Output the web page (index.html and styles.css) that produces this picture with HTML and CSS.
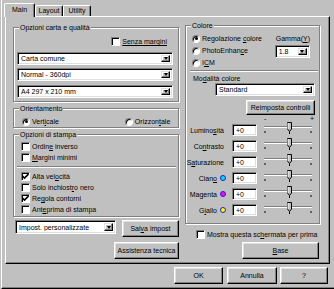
FILE: index.html
```html
<!DOCTYPE html>
<html>
  <head>
    <title>Main</title>
    <link rel="stylesheet" href="styles.css">
  </head>
  <body>
    <div class="dialog">
      <div class="tabs">
        <div class="tab active tab-main">Main</div>
        <div class="tab tab-layout">Layout</div>
        <div class="tab tab-utility">Utility</div>
      </div>

      <div class="panel">
        <div class="col-left">
          <div class="group g-paper">
            <div class="group-title">Opzioni carta e qualità</div>
            <div class="opt opt-borderless"><span class="check"></span><span class="focus">Senza margini</span></div>
            <div class="field select sel-paper"><span class="val">Carta comune</span><span class="arrow"></span></div>
            <div class="field select sel-paper"><span class="val">Normal - 360dpi</span><span class="arrow"></span></div>
            <div class="field select sel-paper sel-size"><span class="val">A4 297 x 210 mm</span><span class="arrow"></span></div>
          </div>

          <div class="group g-orient">
            <div class="group-title">Orientamento</div>
            <div class="orient-row">
              <div class="opt"><span class="radio on"></span><span>Vert<u>i</u>cale</span></div>
              <div class="opt opt-land"><span class="radio"></span><span>Orizzon<u>t</u>ale</span></div>
            </div>
          </div>

          <div class="group g-print">
            <div class="group-title">Opzioni di stampa</div>
            <div class="opt opt-first"><span class="check"></span><span>Ordin<u>e</u> inverso</span></div>
            <div class="opt"><span class="check"></span><span><u>M</u>argini minimi</span></div>
            <div class="sep"></div>
            <div class="opt opt-after-sep"><span class="check on"><svg width="7" height="7" viewBox="0 0 7 7"><polyline points="0.5,3 2.5,5 6.5,1" fill="none" stroke="#000" stroke-width="1.6"/></svg></span><span>Alta vel<u>o</u>cità</span></div>
            <div class="opt"><span class="check"></span><span>Solo inchiost<u>r</u>o nero</span></div>
            <div class="opt"><span class="check on"><svg width="7" height="7" viewBox="0 0 7 7"><polyline points="0.5,3 2.5,5 6.5,1" fill="none" stroke="#000" stroke-width="1.6"/></svg></span><span>Re<u>g</u>ola contorni</span></div>
            <div class="opt"><span class="check"></span><span>Ant<u>e</u>prima di stampa</span></div>
          </div>

          <div class="save-row">
            <div class="field select sel-custom"><span class="val">Impost. personalizzate</span><span class="arrow"></span></div>
            <button class="btn btn-save" type="button">Sal<u>v</u>a impost</button>
          </div>
          <button class="btn btn-help" type="button">Assistenza tecnica</button>
        </div>

        <div class="col-right">
          <div class="group g-color">
            <div class="group-title">Colore</div>
            <div class="color-top">
              <div class="color-modes">
                <div class="opt"><span class="radio on"></span><span>Regolazione <u>c</u>olore</span></div>
                <div class="opt"><span class="radio"></span><span>PhotoEnhan<u>c</u>e</span></div>
                <div class="opt"><span class="radio"></span><span>I<u>C</u>M</span></div>
              </div>
              <div class="gamma">
                <div class="gamma-label">Gamma(<u>Y</u>)</div>
                <div class="field select sel-gamma"><span class="val">1.8</span><span class="arrow"></span></div>
              </div>
            </div>
            <div class="sep sep-color"></div>
            <div class="mode-label">Mo<u>d</u>alità colore</div>
            <div class="field select sel-mode"><span class="val">Standard</span><span class="arrow"></span></div>
            <button class="btn btn-reset" type="button">Reimposta controlli</button>
            <div class="scale"><span>-</span><span>+</span></div>

            <div class="adj">
              <div class="adj-label"><span>Lumino<u>s</u>ità</span></div>
              <div class="field adj-input">+0</div>
              <svg class="slider" width="50" height="12" viewBox="0 0 50 12"><line x1="1" y1="4.5" x2="49" y2="4.5" stroke="#808080"/><line x1="1" y1="5.5" x2="49" y2="5.5" stroke="#fff"/><path d="M24.5 0.5 H28.5 V7 L26.5 9.5 L24.5 7 Z" fill="#c0c0c0" stroke="#000" stroke-width="1"/><line x1="25" y1="1" x2="25" y2="7" stroke="#fff"/><rect x="1.5" y="9" width="1" height="2" fill="#000"/><rect x="26" y="10" width="1" height="2" fill="#000"/><rect x="47.5" y="9" width="1" height="2" fill="#000"/></svg>
            </div>
            <div class="adj">
              <div class="adj-label"><span>Co<u>n</u>trasto</span></div>
              <div class="field adj-input">+0</div>
              <svg class="slider" width="50" height="12" viewBox="0 0 50 12"><line x1="1" y1="4.5" x2="49" y2="4.5" stroke="#808080"/><line x1="1" y1="5.5" x2="49" y2="5.5" stroke="#fff"/><path d="M24.5 0.5 H28.5 V7 L26.5 9.5 L24.5 7 Z" fill="#c0c0c0" stroke="#000" stroke-width="1"/><line x1="25" y1="1" x2="25" y2="7" stroke="#fff"/><rect x="1.5" y="9" width="1" height="2" fill="#000"/><rect x="26" y="10" width="1" height="2" fill="#000"/><rect x="47.5" y="9" width="1" height="2" fill="#000"/></svg>
            </div>
            <div class="adj">
              <div class="adj-label"><span>S<u>a</u>turazione</span></div>
              <div class="field adj-input">+0</div>
              <svg class="slider" width="50" height="12" viewBox="0 0 50 12"><line x1="1" y1="4.5" x2="49" y2="4.5" stroke="#808080"/><line x1="1" y1="5.5" x2="49" y2="5.5" stroke="#fff"/><path d="M24.5 0.5 H28.5 V7 L26.5 9.5 L24.5 7 Z" fill="#c0c0c0" stroke="#000" stroke-width="1"/><line x1="25" y1="1" x2="25" y2="7" stroke="#fff"/><rect x="1.5" y="9" width="1" height="2" fill="#000"/><rect x="26" y="10" width="1" height="2" fill="#000"/><rect x="47.5" y="9" width="1" height="2" fill="#000"/></svg>
            </div>
            <div class="adj">
              <div class="adj-label dotted"><span>Cian<u>o</u></span><span class="dot dot-cyan"></span></div>
              <div class="field adj-input">+0</div>
              <svg class="slider" width="50" height="12" viewBox="0 0 50 12"><line x1="1" y1="4.5" x2="49" y2="4.5" stroke="#808080"/><line x1="1" y1="5.5" x2="49" y2="5.5" stroke="#fff"/><path d="M24.5 0.5 H28.5 V7 L26.5 9.5 L24.5 7 Z" fill="#c0c0c0" stroke="#000" stroke-width="1"/><line x1="25" y1="1" x2="25" y2="7" stroke="#fff"/><rect x="1.5" y="9" width="1" height="2" fill="#000"/><rect x="26" y="10" width="1" height="2" fill="#000"/><rect x="47.5" y="9" width="1" height="2" fill="#000"/></svg>
            </div>
            <div class="adj">
              <div class="adj-label dotted"><span>Magenta</span><span class="dot dot-magenta"></span></div>
              <div class="field adj-input">+0</div>
              <svg class="slider" width="50" height="12" viewBox="0 0 50 12"><line x1="1" y1="4.5" x2="49" y2="4.5" stroke="#808080"/><line x1="1" y1="5.5" x2="49" y2="5.5" stroke="#fff"/><path d="M24.5 0.5 H28.5 V7 L26.5 9.5 L24.5 7 Z" fill="#c0c0c0" stroke="#000" stroke-width="1"/><line x1="25" y1="1" x2="25" y2="7" stroke="#fff"/><rect x="1.5" y="9" width="1" height="2" fill="#000"/><rect x="26" y="10" width="1" height="2" fill="#000"/><rect x="47.5" y="9" width="1" height="2" fill="#000"/></svg>
            </div>
            <div class="adj">
              <div class="adj-label dotted"><span>G<u>i</u>allo</span><span class="dot dot-yellow"></span></div>
              <div class="field adj-input">+0</div>
              <svg class="slider" width="50" height="12" viewBox="0 0 50 12"><line x1="1" y1="4.5" x2="49" y2="4.5" stroke="#808080"/><line x1="1" y1="5.5" x2="49" y2="5.5" stroke="#fff"/><path d="M24.5 0.5 H28.5 V7 L26.5 9.5 L24.5 7 Z" fill="#c0c0c0" stroke="#000" stroke-width="1"/><line x1="25" y1="1" x2="25" y2="7" stroke="#fff"/><rect x="1.5" y="9" width="1" height="2" fill="#000"/><rect x="26" y="10" width="1" height="2" fill="#000"/><rect x="47.5" y="9" width="1" height="2" fill="#000"/></svg>
            </div>
          </div>

          <div class="opt opt-show"><span class="check"></span><span>Mostra questa sc<u>h</u>ermata per prima</span></div>
          <button class="btn btn-base" type="button"><u>B</u>ase</button>
        </div>
      </div>

      <div class="actions">
        <button class="btn btn-ok" type="button">OK</button>
        <button class="btn btn-cancel" type="button">Annulla</button>
        <button class="btn btn-q" type="button">?</button>
      </div>
    </div>
  </body>
</html>
```

FILE: styles.css
```css
* {
  box-sizing: border-box;
}

body {
  margin: 0;
  background-color: #C0C0C0;
  font-family: "Liberation Sans", Arial, sans-serif;
  font-size: 7px;
  color: #000;
  overflow: hidden;
}

u {
  text-decoration-thickness: 1px;
  text-underline-offset: 1px;
}

.dialog {
  width: 333px;
  height: 289px;
  margin-left: 1px;
  padding-top: 3px;
  border-left: 1px solid #FFF;
  border-bottom: 1px solid #000;
  box-shadow: inset 0 -1px 0 #808080;
}

/* tabs */
.tabs {
  display: flex;
  align-items: flex-end;
  height: 14px;
  margin-left: 2px;
}

.tab {
  height: 11px;
  margin-bottom: 1px;
  line-height: 10px;
  text-align: center;
  border: 1px solid;
  border-color: #FFF #000 transparent #FFF;
  border-bottom: none;
  border-radius: 2px 2px 0 0;
  box-shadow: inset -1px 0 0 #808080;
}

.tab.active {
  position: relative;
  z-index: 1;
  height: 14px;
  margin-bottom: 0;
  line-height: 12px;
  background-color: #C0C0C0;
}

.tab-main { width: 31px; }
.tab-layout { width: 28px; }
.tab-utility { width: 28px; }

/* panel */
.panel {
  display: flex;
  gap: 6px;
  width: 325px;
  height: 248px;
  margin: -1px 0 0 3px;
  padding: 8px 0 0 7px;
  border: 1px solid;
  border-color: #FFF #000 #000 #FFF;
  box-shadow: inset -1px -1px 0 #808080;
}

.col-left {
  display: flex;
  flex-direction: column;
  width: 166px;
  margin-top: 2px;
}

.col-right {
  display: flex;
  flex-direction: column;
  width: 135px;
}

.group {
  display: flex;
  flex-direction: column;
  padding-bottom: 3px;
  border: 1px solid #808080;
  box-shadow: 1px 1px 0 #FFF, inset 1px 1px 0 #FFF;
}

.group-title {
  align-self: flex-start;
  height: 9px;
  line-height: 9px;
  margin: -5px 0 0 5px;
  padding: 0 1px;
  background-color: #C0C0C0;
}

.sep {
  height: 2px;
  border-top: 1px solid #808080;
  border-bottom: 1px solid #FFF;
}

/* option rows */
.opt {
  display: flex;
  align-items: center;
  gap: 2px;
  height: 9px;
  line-height: 9px;
  white-space: nowrap;
}

.check {
  display: flex;
  align-items: center;
  justify-content: center;
  flex: none;
  width: 9px;
  height: 9px;
  background-color: #FFF;
  border: 1px solid;
  border-color: #808080 #FFF #FFF #808080;
  box-shadow: inset 1px 1px 0 #000;
}

.radio {
  display: flex;
  align-items: center;
  justify-content: center;
  flex: none;
  width: 8px;
  height: 8px;
  border-radius: 50%;
  background-color: #FFF;
  border: 1px solid;
  border-color: #808080 #FFF #FFF #808080;
  box-shadow: inset 1px 1px 0 #000;
}

.radio.on::after {
  content: "";
  width: 3px;
  height: 3px;
  border-radius: 50%;
  background-color: #000;
}

.focus {
  text-decoration: underline;
}

/* fields */
.field {
  display: flex;
  align-items: stretch;
  background-color: #FFF;
  padding: 2px 2px 2px 3px;
  border: 1px solid;
  border-color: #808080 #FFF #FFF #808080;
  box-shadow: inset 1px 1px 0 #000, inset -1px -1px 0 #DFDFDF;
}

.field .val {
  flex: 1;
  display: flex;
  align-items: center;
  white-space: nowrap;
  overflow: hidden;
}

.arrow {
  display: flex;
  align-items: center;
  justify-content: center;
  flex: none;
  width: 9px;
  background-color: #C0C0C0;
  border: 1px solid;
  border-color: #DFDFDF #000 #000 #DFDFDF;
  box-shadow: inset -1px -1px 0 #808080, inset 1px 1px 0 #FFF;
}

.arrow::after {
  content: "";
  border-style: solid;
  border-width: 3px 2.5px 0;
  border-color: #000 transparent transparent;
}

/* buttons */
.btn {
  display: flex;
  align-items: center;
  justify-content: center;
  padding: 0;
  font: inherit;
  color: #000;
  background-color: #C0C0C0;
  border: 1px solid;
  border-color: #FFF #000 #000 #FFF;
  box-shadow: inset -1px -1px 0 #808080, inset 1px 1px 0 #DFDFDF;
  white-space: nowrap;
}

/* left column */
.opt-borderless {
  align-self: flex-end;
  margin: 5px 11px 0 0;
}

.sel-paper {
  height: 13px;
  margin: 3px 5px 0 3px;
}

.opt-borderless + .sel-paper {
  margin-top: 6px;
}

.sel-size {
  margin-top: 4px;
}

.g-orient {
  margin-top: 6px;
  padding-bottom: 1px;
}

.orient-row {
  display: flex;
  margin: 4px 0 0 8px;
}

.opt-land {
  margin-left: 66px;
}

.g-print {
  margin-top: 6px;
  padding-bottom: 2px;
}

.g-print .opt {
  margin: 2px 0 0 7px;
}

.g-print .opt-first {
  margin-top: 3px;
}

.g-print .sep {
  margin: 4px 2px 0 3px;
}

.g-print .opt-after-sep {
  margin-top: 4px;
}

.save-row {
  display: flex;
  align-items: flex-start;
  margin-top: 3px;
}

.sel-custom {
  width: 101px;
  height: 14px;
  margin-left: 2px;
}

.btn-save {
  width: 57px;
  height: 17px;
  margin: 0 0 0 auto;
}

.btn-help {
  align-self: flex-end;
  width: 65px;
  height: 17px;
  margin-top: 5px;
}

/* right column */
.color-top {
  display: flex;
  margin-top: 4px;
}

.color-modes {
  display: flex;
  flex-direction: column;
  gap: 3px;
  margin-left: 6px;
}

.gamma {
  display: flex;
  flex-direction: column;
  margin: 0 9px 0 auto;
}

.gamma-label {
  height: 9px;
  line-height: 9px;
}

.sel-gamma {
  width: 35px;
  height: 13px;
  margin: 2px 0 0 -1px;
}

.sep-color {
  margin: 3px 1px 0 4px;
}

.mode-label {
  height: 9px;
  line-height: 9px;
  margin: 2px 0 0 7px;
}

.sel-mode {
  align-self: flex-end;
  width: 100px;
  height: 13px;
  margin-right: 4px;
}

.btn-reset {
  align-self: flex-end;
  width: 69px;
  height: 15px;
  margin: 4px 4px 0 0;
}

.scale {
  display: flex;
  justify-content: space-between;
  width: 50px;
  height: 6px;
  line-height: 6px;
  margin: 1px 0 0 78px;
}

.adj {
  display: flex;
  align-items: flex-start;
  height: 12px;
  margin-top: 4px;
}

.scale + .adj {
  margin-top: 2px;
}

.adj-label {
  display: flex;
  align-items: center;
  justify-content: flex-end;
  gap: 3px;
  width: 40px;
  height: 12px;
  padding-right: 2px;
  white-space: nowrap;
}

.adj-label.dotted {
  padding-right: 0;
}

.dot {
  width: 6px;
  height: 6px;
  border-radius: 50%;
  border: 1px solid #2020C0;
}

.dot-cyan { background-color: #00E0FF; }
.dot-magenta { background-color: #FF00FF; }
.dot-yellow { background-color: #FFFF00; }

.adj-input {
  align-items: center;
  width: 25px;
  height: 12px;
  margin-left: 6px;
  padding: 0 0 0 3px;
}

.slider {
  flex: none;
  margin: -2px 0 0 6px;
}

.g-color {
  padding-bottom: 7px;
}

.opt-show {
  margin: 6px 0 0 11px;
}

.btn-base {
  align-self: flex-end;
  width: 77px;
  height: 17px;
  margin: 3px 1px 0 0;
}

/* bottom buttons */
.actions {
  display: flex;
  margin: 3px 0 0 172px;
}

.actions .btn {
  height: 17px;
}

.btn-ok { width: 49px; }
.btn-cancel { width: 50px; margin-left: 4px; }
.btn-q { width: 48px; margin-left: 3px; }
```
